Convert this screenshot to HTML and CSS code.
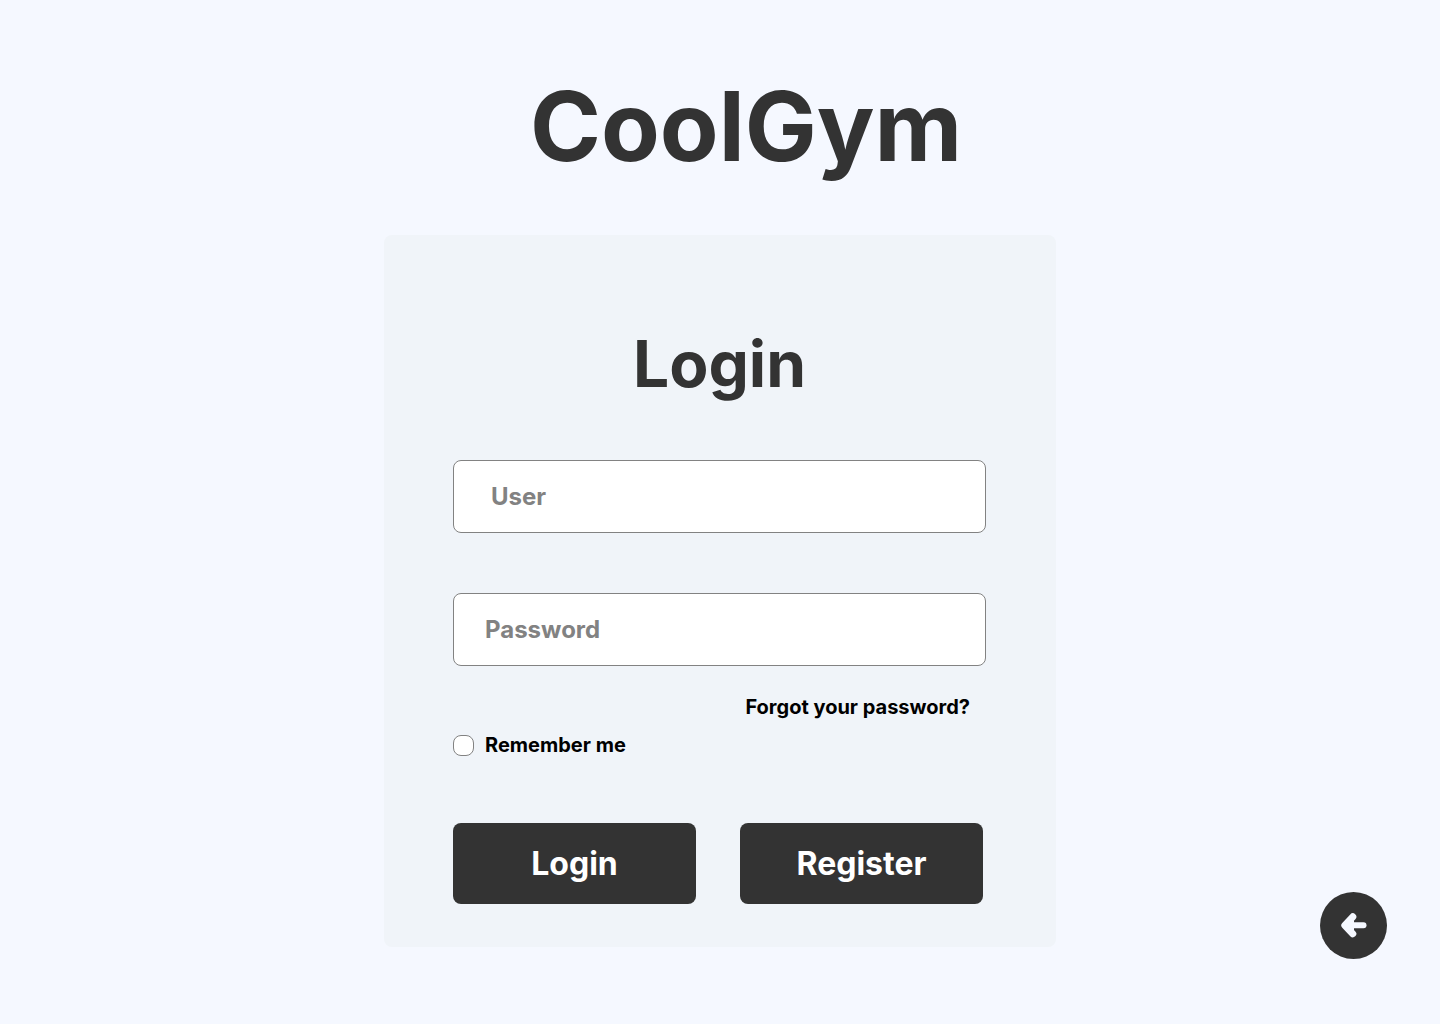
FILE: index.html
```html
<!DOCTYPE html>
<html lang="en">
<head>
<meta charset="utf-8">
<meta name="viewport" content="width=device-width, initial-scale=1">
<title>CoolGym</title>
<link rel="stylesheet" href="styles.css">
</head>
<body>
<main class="page">
  <h1 class="brand">CoolGym</h1>
  <form class="card">
    <h2 class="card-title">Login</h2>
    <input class="field field-user" type="text" placeholder="User" aria-label="User">
    <input class="field" type="password" placeholder="Password" aria-label="Password">
    <a class="forgot" href="#">Forgot your password?</a>
    <label class="remember"><input class="check" type="checkbox">Remember me</label>
    <div class="actions">
      <button class="btn" type="submit">Login</button>
      <button class="btn" type="button">Register</button>
    </div>
  </form>
</main>
<button class="back" type="button" aria-label="Back">
  <svg width="27" height="27" viewBox="0 0 27 27" fill="none" stroke="#f5f8ff" stroke-width="6" stroke-linecap="round" stroke-linejoin="round"><path d="M12.800 4.800 4.800 13.300l8 8.500" stroke-width="7"/><path d="M6 13.300h17.500"/><path d="M14 8v11l-6-5.500z" fill="#f5f8ff" stroke="none"/></svg>
</button>
</body>
</html>
```

FILE: styles.css
```css
* { box-sizing: border-box; }
body {
  margin: 0;
  min-height: 100vh;
  background: #f5f8ff;
  color: #333;
  font-family: Inter, sans-serif;
  font-weight: 700;
}
.page {
  display: flex;
  flex-direction: column;
  align-items: center;
  padding: 68px 16px 76px;
}
.brand {
  margin: 0 0 51px;
  padding-left: 52px;
  font-size: 96px;
  line-height: 116px;
}
.card {
  display: flex;
  flex-direction: column;
  width: 100%;
  max-width: 672px;
  padding: 90px 70px 43px 69px;
  border-radius: 8px;
  background: #f0f4f9;
}
.card-title {
  margin: 0 0 57px;
  font-size: 64px;
  line-height: 78px;
  text-align: center;
}
.field {
  width: 100%;
  height: 73px;
  margin-bottom: 28px;
  padding: 0 31px;
  border: 1px solid #828282;
  border-radius: 8px;
  background: #fff;
  color: #333;
  font: inherit;
  font-size: 24px;
}
.field-user {
  margin-bottom: 60px;
  padding: 0 37px;
}
.field::placeholder { color: #828282; opacity: 1; }
.forgot {
  align-self: flex-end;
  margin: 0 16px 12px 0;
  color: #000;
  font-size: 20px;
  line-height: 26px;
  text-decoration: none;
}
.remember {
  display: flex;
  align-items: center;
  align-self: flex-start;
  gap: 11px;
  margin-bottom: 65px;
  color: #000;
  font-size: 20px;
  line-height: 26px;
}
.check {
  appearance: none;
  width: 21px;
  height: 21px;
  margin: 0;
  border: 1px solid #828282;
  border-radius: 8px;
  background: #fff;
}
.check:checked { background: #333; }
.actions {
  display: grid;
  grid-template-columns: 1fr 1fr;
  gap: 44px;
  padding-right: 3px;
}
.btn {
  height: 81px;
  padding: 0;
  border: 0;
  border-radius: 8px;
  background: #333;
  color: #fff;
  font: inherit;
  font-size: 32px;
}
.back {
  position: fixed;
  right: 53px;
  bottom: 65px;
  display: grid;
  place-items: center;
  width: 67px;
  height: 67px;
  padding: 0;
  border: 0;
  border-radius: 50%;
  background: #333;
}
```
